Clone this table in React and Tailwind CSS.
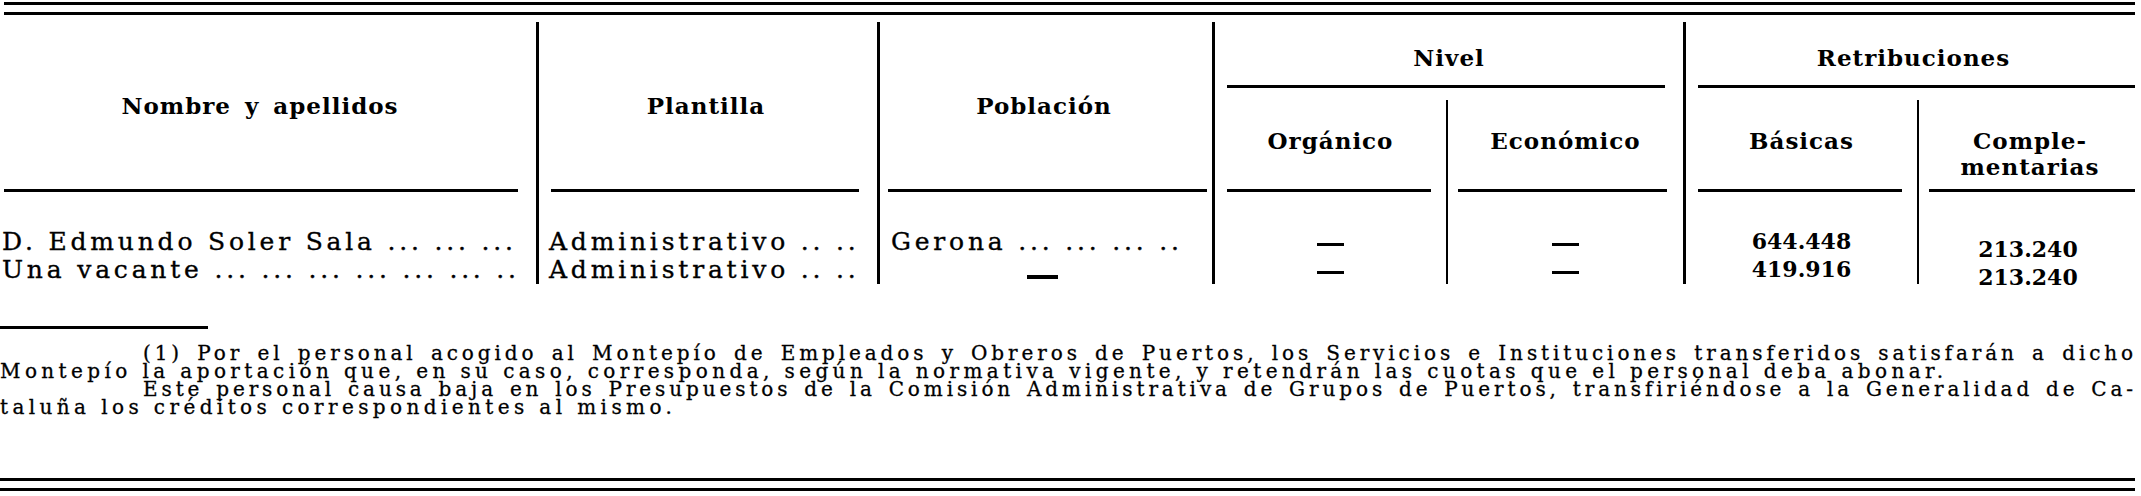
import React from "react";

const serif = "font-['DejaVu_Serif',serif]";
const head = `${serif} font-bold text-[23px] leading-[26px] tracking-[1px] text-black`;
const body = `${serif} text-[25px] leading-[28px] tracking-[3.8px] text-black whitespace-nowrap [-webkit-text-stroke:0.35px_black]`;
const num = `${serif} font-bold text-[22px] leading-[28px] text-black`;
const note = `${serif} text-[20px] leading-[18px] text-black whitespace-nowrap [-webkit-text-stroke:0.3px_black]`;
const noteJust = `${note} tracking-[3.9px] pl-[143px] text-justify [text-align-last:justify]`;
const noteLeft = `${note} tracking-[4.4px]`;

function Rule({ className = "" }) {
  return <div className={`h-[3px] bg-black ${className}`} />;
}

function Dash() {
  return (
    <div className="h-[28px] flex items-center justify-center">
      <div className="w-[27px] h-[3px] bg-black" />
    </div>
  );
}

export default function App() {
  return (
    <div className="w-[2141px] h-[496px] bg-white overflow-hidden">
      {/* doble filete superior */}
      <div className="pt-[2px]">
        <Rule className="ml-[4px] mr-[6px]" />
        <Rule className="ml-[4px] mr-[6px] mt-[7px]" />
      </div>

      <div className="mt-[7px] grid grid-cols-[536px_341px_335px_234px_237px_234px_1fr] grid-rows-[66px_104px_92px]">
        {/* cabecera */}
        <div className="row-span-2 flex flex-col">
          <div className={`flex-1 flex items-center justify-center pr-[16px] [word-spacing:5px] ${head}`}>
            Nombre y apellidos
          </div>
          <Rule className="ml-[4px] mr-[18px]" />
        </div>
        <div className="row-span-2 flex flex-col border-l-[3px] border-black">
          <div className={`flex-1 flex items-center justify-center pr-[4px] ${head}`}>Plantilla</div>
          <Rule className="ml-[12px] mr-[18px]" />
        </div>
        <div className="row-span-2 flex flex-col border-l-[3px] border-black">
          <div className={`flex-1 flex items-center justify-center pr-[4px] ${head}`}>Población</div>
          <Rule className="ml-[8px] mr-[5px]" />
        </div>
        <div className="col-span-2 flex flex-col border-l-[3px] border-black">
          <div className={`flex-1 flex items-center justify-center pt-[8px] ${head}`}>Nivel</div>
          <Rule className="ml-[12px] mr-[18px]" />
        </div>
        <div className="col-span-2 flex flex-col border-l-[3px] border-black">
          <div className={`flex-1 flex items-center justify-center pt-[8px] ${head}`}>Retribuciones</div>
          <Rule className="ml-[12px] mr-[6px]" />
        </div>

        <div className="flex flex-col border-l-[3px] border-black">
          <div className={`flex-1 flex items-center justify-center pt-[4px] ${head}`}>Orgánico</div>
          <Rule className="ml-[12px] mr-[15px]" />
        </div>
        <div className="flex flex-col pt-[12px]">
          <div className="flex-1 flex flex-col border-l-[2px] border-black">
            <div className={`flex-1 flex items-center justify-center pb-[8px] ${head}`}>Económico</div>
            <Rule className="ml-[10px] mr-[16px]" />
          </div>
        </div>
        <div className="flex flex-col border-l-[3px] border-black">
          <div className={`flex-1 flex items-center justify-center pt-[4px] ${head}`}>Básicas</div>
          <Rule className="ml-[12px] mr-[15px]" />
        </div>
        <div className="flex flex-col pt-[12px]">
          <div className="flex-1 flex flex-col border-l-[2px] border-black">
            <div className={`flex-1 flex flex-col items-center justify-center pt-[18px] ${head} leading-[22px]`}>
              <span>Comple-</span>
              <span>mentarias</span>
            </div>
            <Rule className="ml-[10px] mr-[6px]" />
          </div>
        </div>

        {/* filas */}
        <div className={`pt-[36px] pl-[2px] overflow-hidden ${body}`}>
          <div>D. Edmundo Soler Sala ... ... ...</div>
          <div>Una vacante ... ... ... ... ... ... ..</div>
        </div>
        <div className={`pt-[36px] pl-[10px] border-l-[3px] border-black overflow-hidden ${body}`}>
          <div>Administrativo .. ..</div>
          <div>Administrativo .. ..</div>
        </div>
        <div className={`pt-[36px] pl-[11px] border-l-[3px] border-black overflow-hidden ${body}`}>
          <div>Gerona ... ... ... ..</div>
          <div className="h-[28px] pt-[19px]">
            <div className="ml-[136px] w-[31px] h-[4px] bg-black" />
          </div>
        </div>
        <div className="pt-[38px] border-l-[3px] border-black">
          <Dash />
          <Dash />
        </div>
        <div className="pt-[38px] border-l-[2px] border-black">
          <Dash />
          <Dash />
        </div>
        <div className={`pt-[35px] border-l-[3px] border-black text-center ${num}`}>
          <div>644.448</div>
          <div>419.916</div>
        </div>
        <div className={`pt-[43px] border-l-[2px] border-black text-center pr-[4px] ${num}`}>
          <div>213.240</div>
          <div>213.240</div>
        </div>
      </div>

      {/* notas */}
      <Rule className="mt-[42px] w-[208px]" />
      <div className="mt-[15px] pr-[4px]">
        <div className={noteJust}>
          (1) Por el personal acogido al Montepío de Empleados y Obreros de Puertos, los Servicios e Instituciones transferidos satisfarán a dicho
        </div>
        <div className={noteLeft}>
          Montepío la aportación que, en su caso, corresponda, según la normativa vigente, y retendrán las cuotas que el personal deba abonar.
        </div>
        <div className={noteJust}>
          Este personal causa baja en los Presupuestos de la Comisión Administrativa de Grupos de Puertos, transfiriéndose a la Generalidad de Ca-
        </div>
        <div className={noteLeft}>taluña los créditos correspondientes al mismo.</div>
      </div>

      {/* doble filete inferior */}
      <Rule className="mt-[62px] mr-[6px]" />
      <Rule className="mt-[7px] mr-[6px]" />
    </div>
  );
}
